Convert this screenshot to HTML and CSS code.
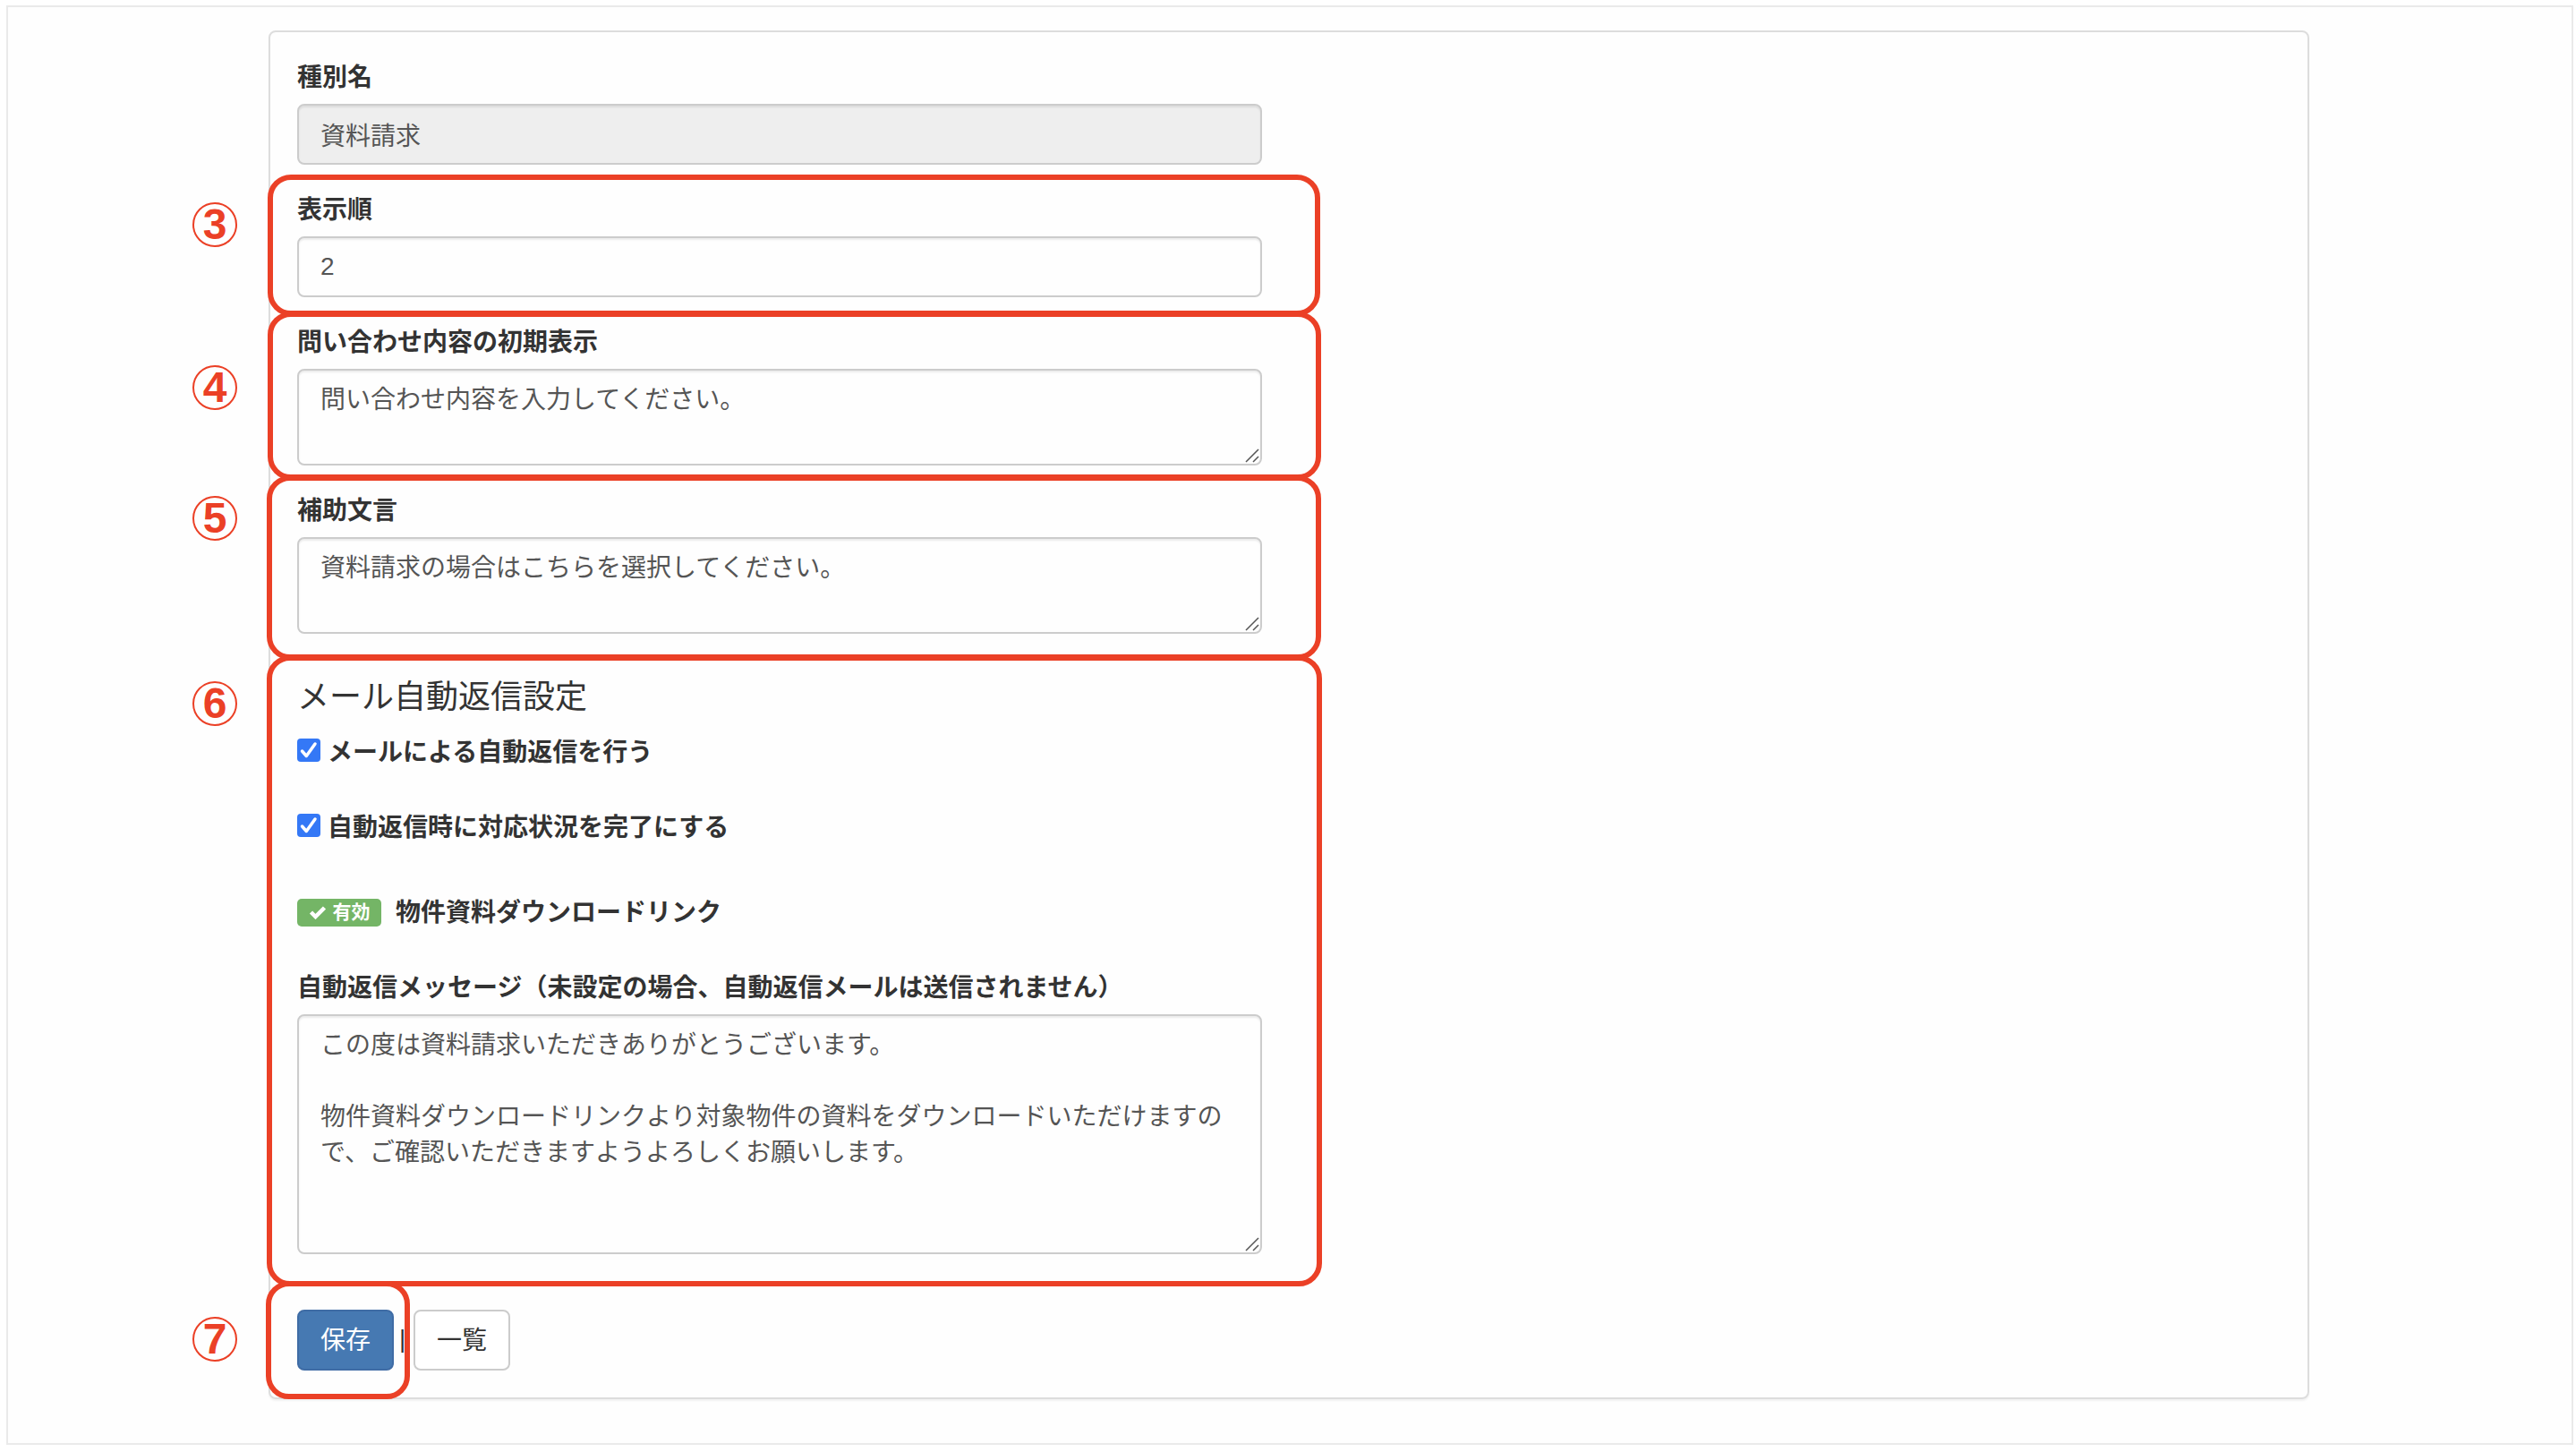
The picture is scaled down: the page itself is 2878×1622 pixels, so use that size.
FILE: index.html
```
<!DOCTYPE html>
<html lang="ja">

	<head>
		<meta charset="UTF-8">
		<title>問い合わせ種別</title>
		<link rel="stylesheet" href="styles.css">
	</head>

	<body>
		<div class="page">
			<form class="panel">
				<div class="form-group">
					<label class="label" for="name">種別名</label>
					<input class="control" type="text" id="name" value="資料請求" disabled>
				</div>
				<div class="form-group">
					<span class="frame frame3"></span>
					<span class="num num3">3</span>
					<label class="label" for="sort">表示順</label>
					<input class="control" type="text" id="sort" value="2">
				</div>
				<div class="form-group">
					<span class="frame frame4"></span>
					<span class="num num4">4</span>
					<label class="label" for="init">問い合わせ内容の初期表示</label>
					<div class="area">
						<textarea class="control" id="init">問い合わせ内容を入力してください。</textarea>
						<svg class="grip" viewBox="0 0 16 16"><path d="M1 15L15 1M9 15l6-6" /></svg>
					</div>
				</div>
				<div class="form-group">
					<span class="frame frame5"></span>
					<span class="num num5">5</span>
					<label class="label" for="help">補助文言</label>
					<div class="area">
						<textarea class="control" id="help">資料請求の場合はこちらを選択してください。</textarea>
						<svg class="grip" viewBox="0 0 16 16"><path d="M1 15L15 1M9 15l6-6" /></svg>
					</div>
				</div>
				<div class="mail">
					<span class="frame frame6"></span>
					<span class="num num6">6</span>
					<h4 class="title">メール自動返信設定</h4>
					<label class="check">
						<svg class="box" viewBox="0 0 26 26"><rect width="26" height="26" rx="4" /><path d="M5.500 14l4.800 5.500L20 6" /></svg>
						メールによる自動返信を行う
					</label>
					<label class="check">
						<svg class="box" viewBox="0 0 26 26"><rect width="26" height="26" rx="4" /><path d="M5.500 14l4.800 5.500L20 6" /></svg>
						自動返信時に対応状況を完了にする
					</label>
					<div class="link">
						<span class="badge">
							<svg class="ok" viewBox="0 0 20 16"><path d="M2.500 8l5 5L17.500 3" /></svg>
							有効
						</span>
						物件資料ダウンロードリンク
					</div>
					<label class="label" for="message">自動返信メッセージ（未設定の場合、自動返信メールは送信されません）</label>
					<div class="area">
						<textarea class="control large" id="message">この度は資料請求いただきありがとうございます。

物件資料ダウンロードリンクより対象物件の資料をダウンロードいただけますので、ご確認いただきますようよろしくお願いします。</textarea>
						<svg class="grip" viewBox="0 0 16 16"><path d="M1 15L15 1M9 15l6-6" /></svg>
					</div>
				</div>
				<div class="buttons">
					<span class="sep">|</span>
					<span class="frame frame7"></span>
					<span class="num num7">7</span>
					<button type="button" class="btn primary">保存</button>
					<button type="button" class="btn">一覧</button>
				</div>
			</form>
		</div>
	</body>

</html>
```
FILE: styles.css
```
* {
	box-sizing: border-box;
}

body {
	margin: 0;
	padding: 6px 3px 8px 7px;
	background-color: #fff;
	color: #333;
	font-family: "Liberation Sans", "Noto Sans CJK JP", sans-serif;
	font-size: 28px;
	line-height: 40px;
}

.page {
	height: 1608px;
	padding: 26px 291px;
	border: 2px solid #eaeaea;
	background-color: #fefefe;
}

.panel {
	width: 2280px;
	height: 1529px;
	padding: 30px;
	border: 2px solid #ddd;
	border-radius: 8px;
	box-shadow: 0 2px 2px rgba(0, 0, 0, .05);
}

.form-group {
	position: relative;
	width: 1078px;
	margin-bottom: 30px;
}

.label {
	display: block;
	padding-top: 1px;
	margin-bottom: 9px;
	font-weight: bold;
	white-space: nowrap;
}

.control {
	display: block;
	width: 100%;
	height: 68px;
	padding: 12px 24px;
	border: 2px solid #ccc;
	border-radius: 8px;
	box-shadow: inset 0 2px 2px rgba(0, 0, 0, .075);
	background-color: #fefefe;
	color: #555;
	font: inherit;
	line-height: 40px;
}

.control:disabled {
	background-color: #eee;
}

textarea.control {
	height: 108px;
	padding-top: 13px;
	resize: none;
	overflow: hidden;
}

textarea.large {
	height: 268px;
}

.area {
	position: relative;
}

.grip {
	position: absolute;
	right: 3px;
	bottom: 3px;
	width: 16px;
	height: 16px;
	fill: none;
	stroke: #555;
	stroke-width: 1.5;
}

/* メール自動返信 */
.mail {
	position: relative;
	width: 1078px;
	padding-top: 21px;
}

.title {
	margin: 0 0 22px;
	font-size: 36px;
	font-weight: normal;
	line-height: 40px;
}

.check {
	display: flex;
	align-items: center;
	gap: 8px;
	height: 40px;
	margin-bottom: 44px;
	font-weight: bold;
}

.box {
	width: 26px;
	height: 26px;
	margin-top: -6px;
	fill: #3478f6;
}

.box path {
	fill: none;
	stroke: #fff;
	stroke-width: 3.5;
	stroke-linecap: round;
	stroke-linejoin: round;
}

.link {
	display: flex;
	align-items: center;
	gap: 16px;
	height: 40px;
	margin: 55px 0 43px;
	font-weight: bold;
}

.badge {
	display: flex;
	align-items: center;
	justify-content: center;
	gap: 7px;
	width: 94px;
	height: 31px;
	margin-top: -2px;
	border-radius: 5px;
	background-color: #74b566;
	color: #fff;
	font-size: 21px;
	line-height: 28px;
}

.ok {
	width: 20px;
	height: 16px;
	fill: none;
	stroke: #fff;
	stroke-width: 4.5;
}

.buttons {
	position: relative;
	display: flex;
	gap: 22px;
	margin-top: 62px;
}

.btn {
	width: 108px;
	height: 68px;
	padding: 1px 0 0;
	border: 2px solid #ccc;
	border-radius: 8px;
	background-color: #fff;
	color: #333;
	font: inherit;
}

.btn.primary {
	border-color: #3f6ca5;
	background-color: #4679b2;
	color: #fff;
}

.sep {
	position: absolute;
	left: 114px;
	top: 13px;
}

/* 赤枠と番号 */
.frame {
	position: absolute;
	border: 6px solid #eb4026;
	border-radius: 26px;
	pointer-events: none;
}

.frame3 {
	left: -33px;
	top: -19px;
	width: 1176px;
	height: 158px;
}

.frame4 {
	left: -33px;
	top: -14px;
	width: 1177px;
	height: 188px;
}

.frame5 {
	left: -34px;
	top: -19px;
	width: 1178px;
	height: 206px;
}

.frame6 {
	left: -34px;
	top: -6px;
	width: 1179px;
	height: 705px;
}

.frame7 {
	left: -35px;
	top: -32px;
	width: 161px;
	height: 132px;
}

.num {
	position: absolute;
	left: -117px;
	width: 50px;
	height: 50px;
	border: 2px solid #eb4026;
	border-radius: 50%;
	color: #eb4026;
	font-size: 48px;
	font-weight: bold;
	line-height: 46px;
	text-align: center;
}

.num3 {
	top: 12px;
}

.num4 {
	top: 46px;
}

.num5 {
	top: 4px;
}

.num6 {
	top: 23px;
}

.num7 {
	top: 8px;
}
```
